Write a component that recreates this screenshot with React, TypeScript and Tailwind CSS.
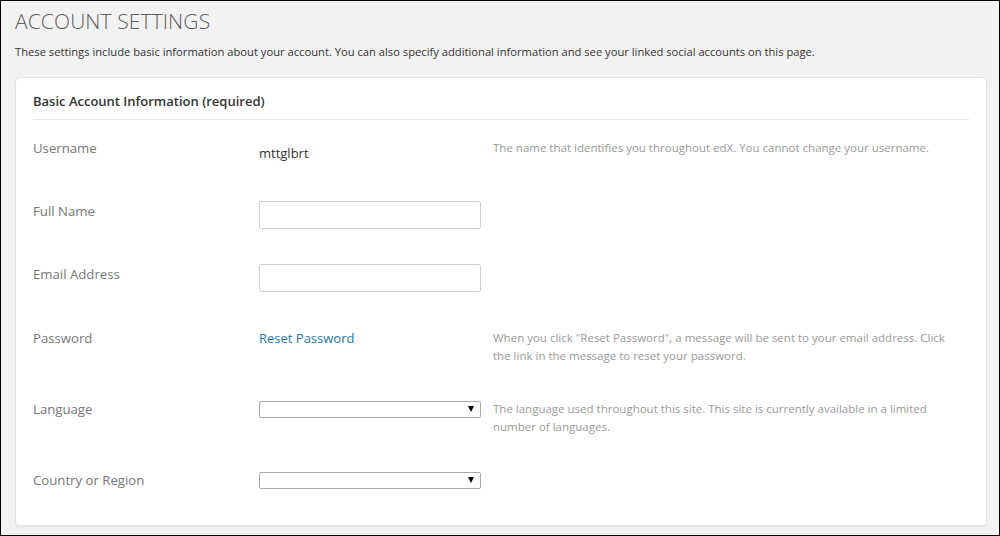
import React from 'react';

const font = { fontFamily: '"Open Sans", "Liberation Sans", sans-serif' };

interface RowProps {
    label: string;
    height: string;
    children?: React.ReactNode;
    help?: React.ReactNode;
}

const Row: React.FC<RowProps> = ({ label, height, children, help }) => (
    <div className={`flex items-start ${height}`}>
        <div className="w-[226px] shrink-0 text-[13.2px] leading-[19px] text-[#777]">{label}</div>
        <div className="w-[222px] shrink-0">{children}</div>
        <div className="ml-[12px] flex-1 pr-[20px] text-[11.5px] leading-[18px] text-[#9a9a9a]">{help}</div>
    </div>
);

const TextInput = () => (
    <input type="text" className="-mt-px block h-[28px] w-[222px] rounded-[2px] border border-[#cfcfcf] bg-white px-2 text-[13px] outline-none" />
);

const SelectBox = () => (
    <div className="relative mt-[1px] h-[17px] w-[222px]">
        <select className="block h-[17px] w-full appearance-none rounded-[2px] border border-[#a9a9a9] bg-white text-[12px] outline-none">
            <option value=""></option>
        </select>
        <span className="pointer-events-none absolute right-[7px] top-[5px] h-0 w-0 border-x-[3px] border-t-[6px] border-x-transparent border-t-black" />
    </div>
);

export default function App() {
    return (
        <div style={font} className="h-[536px] w-[1000px] overflow-hidden border border-black bg-[#f2f2f2]">
            <div className="pl-[14px] pr-[12px]">
                <h1 className="pt-[7px] text-[21px] font-light leading-[26px] tracking-[0.1px] text-[#5f5f5f]">ACCOUNT SETTINGS</h1>
                <p className="mt-[10px] text-[11.2px] leading-[16px] text-[#333]">
                    These settings include basic information about your account. You can also specify additional information and see your linked social accounts on this page.
                </p>
                <div className="mt-[17px] h-[449px] rounded-[4px] border border-[#e3e3e3] bg-white px-[17px] pt-[15px] shadow-[0_1px_2px_rgba(0,0,0,0.06)]">
                    <h2 className="border-b border-[#e6e6e6] pb-[9px] text-[13px] font-semibold leading-[17px] text-[#333]">
                        Basic Account Information (required)
                    </h2>
                    <div className="pt-[19px]">
                        <Row
                            label="Username"
                            height="h-[63px]"
                            help="The name that identifies you throughout edX. You cannot change your username."
                        >
                            <div className="mt-[5px] text-[13px] leading-[19px] text-[#333]">mttglbrt</div>
                        </Row>
                        <Row label="Full Name" height="h-[63px]">
                            <TextInput />
                        </Row>
                        <Row label="Email Address" height="h-[64px]">
                            <TextInput />
                        </Row>
                        <Row
                            label="Password"
                            height="h-[71px]"
                            help={`When you click "Reset Password", a message will be sent to your email address. Click the link in the message to reset your password.`}
                        >
                            <a href="#" className="block text-[13px] leading-[19px] text-[#2a76a6]">Reset Password</a>
                        </Row>
                        <Row
                            label="Language"
                            height="h-[71px]"
                            help="The language used throughout this site. This site is currently available in a limited number of languages."
                        >
                            <SelectBox />
                        </Row>
                        <Row label="Country or Region" height="h-[40px]">
                            <SelectBox />
                        </Row>
                    </div>
                </div>
            </div>
        </div>
    );
}
